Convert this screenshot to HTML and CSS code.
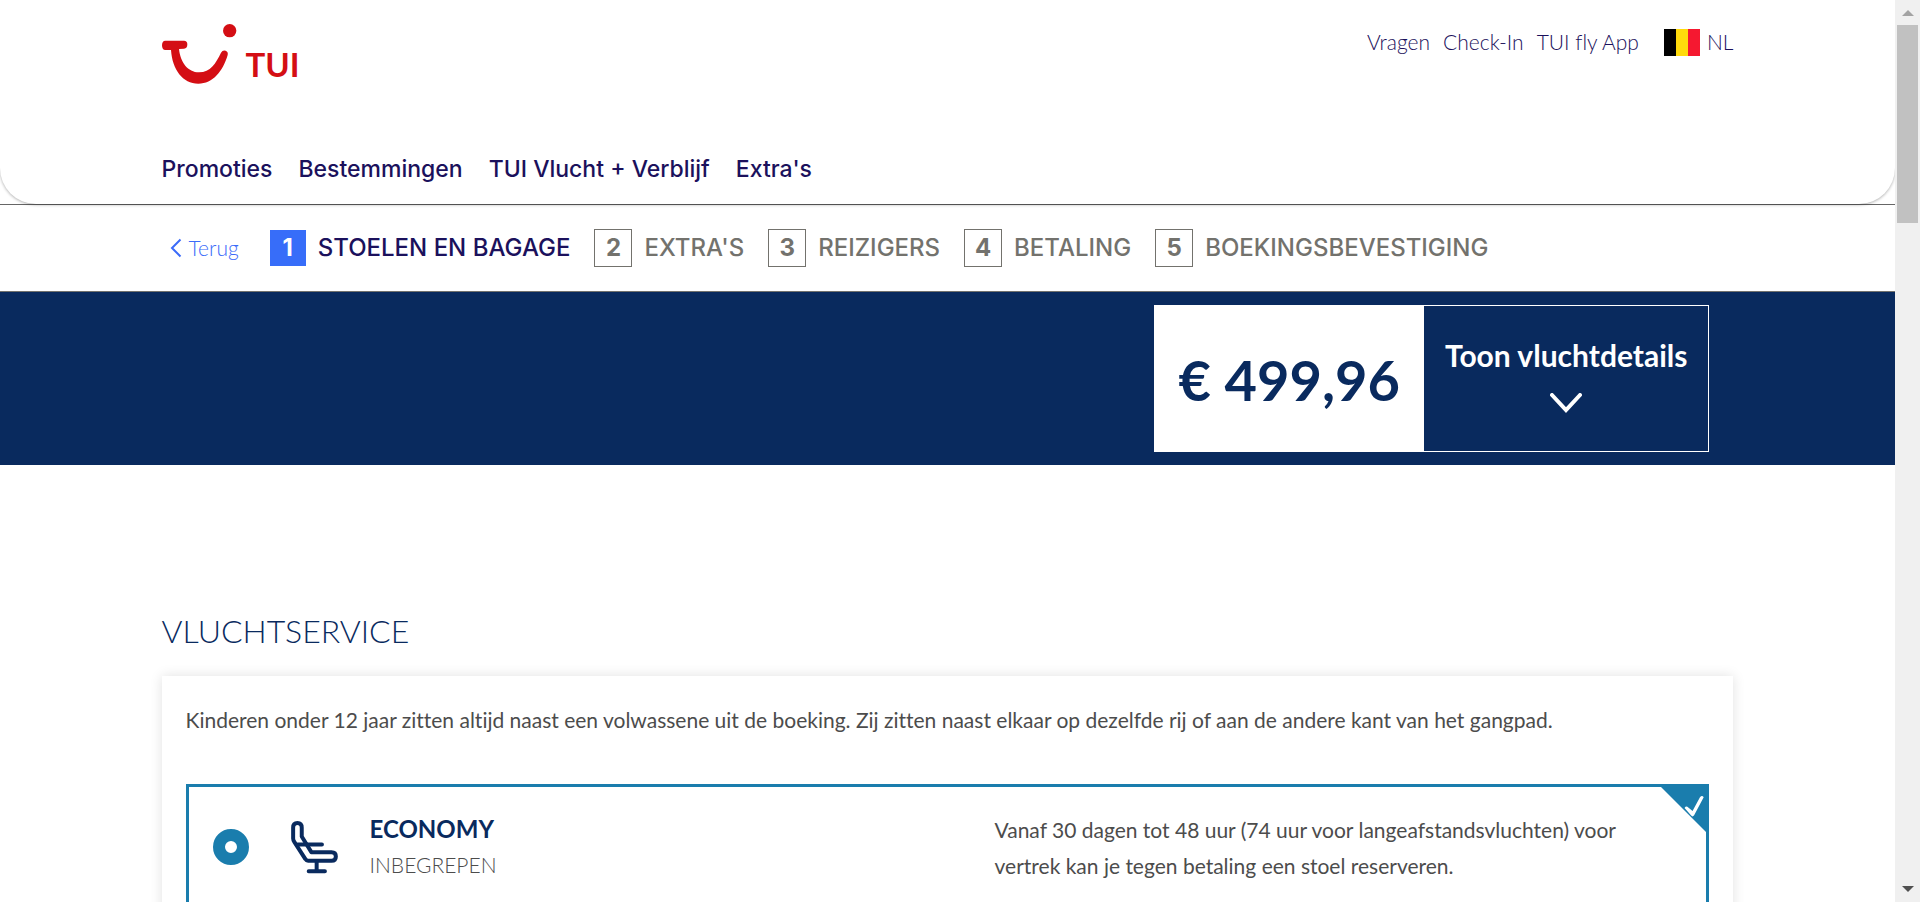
FILE: index.html
```html
<!DOCTYPE html>
<html lang="nl">
<head>
<meta charset="utf-8">
<title>TUI fly - Stoelen en bagage</title>
<link rel="stylesheet" href="styles.css">
</head>
<body>
<div class="viewport">
  <div class="page">
    <header class="site-header">
      <div class="container header-inner">
        <div class="header-top">
          <a class="logo" href="#" aria-label="TUI">
            <svg class="logo-smile" viewBox="0 0 225 180" aria-hidden="true">
              <circle cx="203" cy="20" r="20"/>
              <path d="M10 50H66Q76 50 76 61Q76 74 66 74L51 75C55 115 78 145 111 145C146 145 161 118 177 86Q182 77 191 80Q199 83 197 93C183 141 153 179 109 179C62 179 31 137 27 78H10Q0 78 0 64Q0 50 10 50Z"/>
            </svg>
            <span class="logo-text">TUI</span>
          </a>
          <nav class="top-links" aria-label="Service">
            <a href="#">Vragen</a>
            <a href="#">Check-In</a>
            <a href="#">TUI fly App</a>
            <a class="locale" href="#">
              <svg class="flag" viewBox="0 0 36 27" aria-hidden="true"><path fill="#000" d="M0 0h12v27H0z"/><path fill="#ffda0c" d="M12 0h12v27H12z"/><path fill="#f51830" d="M24 0h12v27H24z"/></svg>
              NL
            </a>
          </nav>
        </div>
        <nav class="main-nav" aria-label="Hoofdmenu">
          <a href="#">Promoties</a>
          <a href="#">Bestemmingen</a>
          <a href="#">TUI Vlucht + Verblijf</a>
          <a href="#">Extra's</a>
        </nav>
      </div>
    </header>

    <div class="progress">
      <div class="container progress-inner">
        <a class="back" href="#">
          <svg class="back-icon" viewBox="0 0 12 20" aria-hidden="true"><path d="M10.500 1.500 2 10l8.500 8.500"/></svg>
          Terug
        </a>
        <ol class="steps">
          <li class="step step-current"><span class="step-number">1</span>STOELEN EN BAGAGE</li>
          <li class="step"><span class="step-number">2</span>EXTRA'S</li>
          <li class="step"><span class="step-number">3</span>REIZIGERS</li>
          <li class="step"><span class="step-number">4</span>BETALING</li>
          <li class="step"><span class="step-number">5</span>BOEKINGSBEVESTIGING</li>
        </ol>
      </div>
    </div>

    <section class="price-bar">
      <div class="container price-inner">
        <div class="price-box">
          <span class="price">€ 499,96</span>
          <button class="details" type="button">
            Toon vluchtdetails
            <svg class="details-icon" viewBox="0 0 32 20" aria-hidden="true"><path d="M2 2 16 17 30 2"/></svg>
          </button>
        </div>
      </div>
    </section>

    <main class="container content">
      <h1 class="title">VLUCHTSERVICE</h1>
      <section class="card">
        <p class="intro">Kinderen onder 12 jaar zitten altijd naast een volwassene uit de boeking. Zij zitten naast elkaar op dezelfde rij of aan de andere kant van het gangpad.</p>
        <div class="option">
          <input class="option-radio" type="radio" name="service" id="economy" checked>
          <svg class="seat" viewBox="0 0 141 160" aria-hidden="true">
            <path d="M6 53V20Q6 6 19 6Q32 6 32 20V47L61 94H122Q135 94 135 107Q135 120 122 120H51Q46 120 43 115L10 64Q6 58 6 53Z"/>
            <path d="M20 71H93M77 121V152M53 152H102"/>
          </svg>
          <label class="option-label" for="economy">
            <span class="option-name">ECONOMY</span>
            <span class="option-price">INBEGREPEN</span>
          </label>
          <p class="option-text">Vanaf 30 dagen tot 48 uur (74 uur voor langeafstandsvluchten) voor vertrek kan je tegen betaling een stoel reserveren.</p>
          <svg class="corner" viewBox="0 0 48 48" aria-hidden="true"><path class="corner-fill" d="M0 0H48V48Z"/><path class="corner-check" d="M25 22.500Q26.500 20 28.500 22L32.500 25.500 39.500 12.500Q41.500 10 43 12.500L34 29.500Q32.500 31.500 31 29.500Z"/></svg>
        </div>
      </section>
    </main>
  </div>
  <div class="scrollbar" aria-hidden="true">
    <svg class="scroll-arrow" viewBox="0 0 12 6"><path fill="#a3a3a3" d="M0 6 6 0l6 6z"/></svg>
    <div class="scroll-track"><div class="scroll-thumb"></div></div>
    <svg class="scroll-arrow" viewBox="0 0 12 6"><path fill="#505050" d="M0 0h12L6 6z"/></svg>
  </div>
</div>
</body>
</html>
```

FILE: styles.css
```css
* {
  box-sizing: border-box;
}

body {
  margin: 0;
  background: #fff;
  color: #4c4c4c;
  font-family: Lato, "Open Sans", sans-serif;
  font-size: 21px;
  font-variant-ligatures: no-common-ligatures;
  font-weight: 400;
  line-height: 36px;
}

a {
  color: inherit;
  text-decoration: none;
}

.viewport {
  display: flex;
  height: 100vh;
}

.page {
  flex: 1;
  min-width: 0;
  overflow: hidden;
}

.container {
  width: 82.95%;
  margin: 0 auto;
}

.site-header {
  position: relative;
  background: #fff;
  border-radius: 0 0 36px 36px;
  box-shadow: 0 1px 3px rgba(0, 0, 0, 0.3);
  color: #1b115c;
}

.header-inner {
  padding: 24px 0 17px;
}

.header-top {
  display: flex;
  justify-content: space-between;
  align-items: flex-start;
}

.logo {
  display: flex;
  align-items: flex-end;
  gap: 9px;
  height: 60px;
}

.logo-smile {
  width: 75px;
  height: 60px;
  fill: #d40e14;
}

.logo-text {
  color: #d40e14;
  font-size: 33px;
  font-weight: 700;
  line-height: 39px;
}

.top-links {
  display: flex;
  align-items: center;
  gap: 13px;
  font-weight: 300;
}

.locale {
  display: flex;
  align-items: center;
  gap: 7px;
  margin-left: 12px;
}

.flag {
  width: 36px;
  height: 27px;
}

.main-nav {
  display: flex;
  gap: 26px;
  margin-top: 67px;
  font-family: Inter, sans-serif;
  font-size: 23px;
  font-weight: 500;
}

.progress {
  border-top: 1px solid #666;
  border-bottom: 1px solid #73726d;
  background: #fff;
}

.progress-inner {
  display: flex;
  align-items: center;
  gap: 31px;
  padding: 24px 0;
}

.back {
  display: flex;
  align-items: center;
  gap: 7px;
  padding-left: 8px;
  color: #3b6bf9;
  font-weight: 300;
}

.back-icon {
  width: 12px;
  height: 20px;
  fill: none;
  stroke: #3b6bf9;
  stroke-width: 2;
}

.steps {
  display: flex;
  gap: 24px;
  margin: 0;
  padding: 0;
  list-style: none;
  color: #73726d;
  font-family: Inter, sans-serif;
  font-size: 24px;
  font-weight: 500;
}

.step {
  display: flex;
  align-items: center;
  gap: 12px;
}

.step-number {
  width: 38px;
  border: 1px solid #73726d;
  font-weight: 700;
  text-align: center;
}

.step-current {
  color: #1b115c;
}

.step-current .step-number {
  width: 36px;
  border: 0;
  background: #376df9;
  color: #fff;
}

.price-bar {
  background: #092a5e;
}

.price-inner {
  display: flex;
  justify-content: flex-end;
  padding: 13px 24px;
}

.price-box {
  display: flex;
  height: 147px;
  border: 1px solid #fff;
}

.price {
  padding: 0 24px 0 23px;
  background: #fff;
  color: #092a5e;
  font-size: 56px;
  font-weight: 700;
  line-height: 148px;
}

.details {
  display: flex;
  flex-direction: column;
  align-items: center;
  justify-content: center;
  gap: 18px;
  padding: 0 21px 10px;
  border: 0;
  background: none;
  color: #fff;
  font: 700 30px/40px Lato, sans-serif;
}

.details-icon {
  width: 32px;
  height: 20px;
  fill: none;
  stroke: #fff;
  stroke-linecap: round;
  stroke-width: 4;
}

.title {
  margin: 142px 0 22px;
  color: #092a5e;
  font-size: 32px;
  font-weight: 300;
  line-height: 47px;
}

.card {
  padding: 24px;
  background: #fff;
  box-shadow: 0 0 12px rgba(0, 0, 0, 0.12);
}

.intro {
  margin: 2px 0 46px;
}

.option {
  position: relative;
  display: flex;
  align-items: center;
  height: 212px;
  padding: 23px 24px 109px;
  border: 3px solid #1a7dad;
}

.option-radio {
  appearance: none;
  flex: none;
  width: 36px;
  height: 36px;
  margin: 0;
  border: 12px solid #1a7dad;
  border-radius: 50%;
  background: #fff;
}

.seat {
  flex: none;
  width: 47px;
  height: 53px;
  margin: 0 32px 0 42px;
  fill: none;
  stroke: #092a5e;
  stroke-linecap: round;
  stroke-linejoin: round;
  stroke-width: 12;
}

.option-label {
  display: flex;
  flex: 1;
  flex-direction: column;
}

.option-name {
  color: #092a5e;
  font-size: 24px;
  font-weight: 700;
}

.option-price {
  font-weight: 300;
}

.option-text {
  width: 46.8%;
  margin: 0;
  padding: 2px 40px 0 0;
}

.corner {
  position: absolute;
  top: -3px;
  right: -3px;
  width: 51px;
  height: 51px;
}

.corner-fill {
  fill: #1a7dad;
}

.corner-check {
  fill: #fff;
}

.scrollbar {
  display: flex;
  flex: none;
  flex-direction: column;
  align-items: center;
  gap: 9px;
  width: 25px;
  padding: 10px 0;
  background: #f0f0f0;
}

.scroll-arrow {
  width: 12px;
  height: 6px;
}

.scroll-track {
  flex: 1;
}

.scroll-thumb {
  width: 21px;
  height: 198px;
  background: #c1c1c1;
}
```
